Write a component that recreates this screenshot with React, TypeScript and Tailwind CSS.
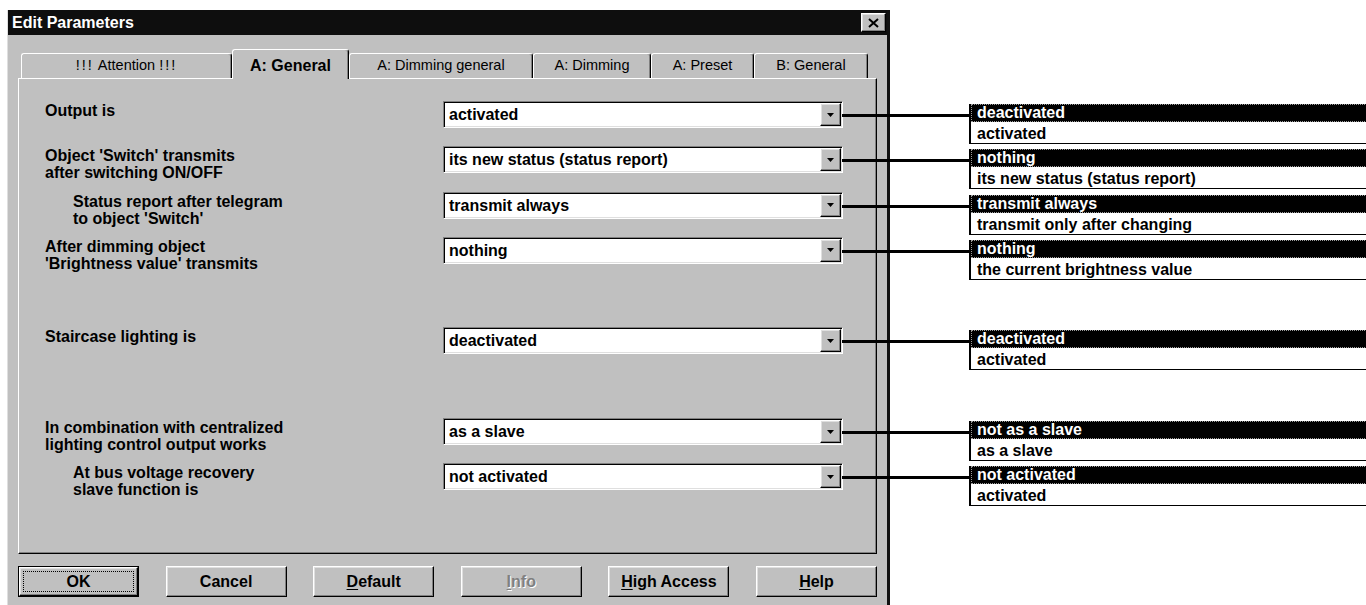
import React from 'react';

type Param = {
  label: string[];
  indent?: boolean;
  value: string;
  options: [string, string];
} | null;

const params: Param[] = [
  { label: ['Output is'], value: 'activated', options: ['deactivated', 'activated'] },
  {
    label: ["Object 'Switch' transmits", 'after switching ON/OFF'],
    value: 'its new status (status report)',
    options: ['nothing', 'its new status (status report)'],
  },
  {
    label: ['Status report after telegram', "to object 'Switch'"],
    indent: true,
    value: 'transmit always',
    options: ['transmit always', 'transmit only after changing'],
  },
  {
    label: ['After dimming object', "'Brightness value' transmits"],
    value: 'nothing',
    options: ['nothing', 'the current brightness value'],
  },
  null,
  { label: ['Staircase lighting is'], value: 'deactivated', options: ['deactivated', 'activated'] },
  null,
  {
    label: ['In combination with centralized', 'lighting control output works'],
    value: 'as a slave',
    options: ['not as a slave', 'as a slave'],
  },
  {
    label: ['At bus voltage recovery', 'slave function is'],
    indent: true,
    value: 'not activated',
    options: ['not activated', 'activated'],
  },
];

const tabs = [
  { label: 'A: General', width: 'w-[117px]', active: true },
  { label: 'A: Dimming general', width: 'w-[184px]' },
  { label: 'A: Dimming', width: 'w-[118px]' },
  { label: 'A: Preset', width: 'w-[103px]' },
  { label: 'B: General', width: 'w-[114px]' },
];

const raised =
  'border border-t-white border-l-white border-r-black border-b-black shadow-[inset_-1px_-1px_0_#808080,inset_1px_1px_0_#dfdfdf]';

const tabIdle =
  'h-[25px] rounded-t-[3px] border-t border-l border-t-white border-l-white border-r border-r-black shadow-[inset_-1px_0_0_#808080] flex items-center justify-center text-[14.5px] font-normal whitespace-nowrap';

function ArrowButton() {
  return (
    <div className={`shrink-0 mr-px w-[21px] h-[23px] bg-[#c0c0c0] flex items-center justify-center ${raised}`}>
      <svg width="7" height="4" viewBox="0 0 7 4">
        <polygon points="0,0 7,0 3.5,4" fill="#000" />
      </svg>
    </div>
  );
}

// the open list drawn next to each combo box, joined by a line
function OptionList({ options }: { options: [string, string] }) {
  return (
    <div className="absolute left-full -top-px flex items-start">
      <div className="mt-[13px] h-[3px] w-[127px] bg-black" />
      <div className="mt-[3px] w-[430px] border-l-2 border-b border-black bg-white">
        <div className="h-[18px] bg-black text-white">
          <div className="h-full border border-dotted border-[#9a9a9a] pl-[5px] leading-[16px] whitespace-nowrap">
            {options[0]}
          </div>
        </div>
        <div className="h-[21px] pl-[6px] pt-[2px] leading-[19px] whitespace-nowrap">{options[1]}</div>
      </div>
    </div>
  );
}

function Combo({ value, options }: { value: string; options: [string, string] }) {
  return (
    <div className="relative w-[400px] h-[27px] bg-white border border-t-[#808080] border-l-[#808080] border-r-white border-b-white shadow-[inset_1px_1px_0_#000,inset_-1px_-1px_0_#dfdfdf] flex items-center">
      <span className="flex-1 pl-[5px] pt-px whitespace-nowrap">{value}</span>
      <ArrowButton />
      <OptionList options={options} />
    </div>
  );
}

function ParamRow({ param }: { param: Param }) {
  if (!param) return <div className="h-[45.3px]" />;
  return (
    <div className="h-[45.3px] flex items-start">
      <div className={`w-[398px] pt-px leading-[17px] ${param.indent ? 'pl-[28px]' : ''}`}>
        {param.label.map((line) => (
          <div key={line} className="whitespace-nowrap">{line}</div>
        ))}
      </div>
      <Combo value={param.value} options={param.options} />
    </div>
  );
}

function Button({
  children,
  isDefault,
  disabled,
}: {
  children: React.ReactNode;
  isDefault?: boolean;
  disabled?: boolean;
}) {
  const text = disabled ? 'text-[#808080] [text-shadow:1px_1px_0_#fff]' : 'text-black';
  if (isDefault) {
    return (
      <div className="w-[121px] h-[31px] border border-black">
        <div className={`h-full bg-[#c0c0c0] p-[3px] ${raised}`}>
          <div className="h-full border border-dotted border-black flex items-center justify-center font-bold">
            {children}
          </div>
        </div>
      </div>
    );
  }
  return (
    <div className={`w-[121px] h-[31px] bg-[#c0c0c0] flex items-center justify-center font-bold ${text} ${raised}`}>
      {children}
    </div>
  );
}

export default function App() {
  return (
    <div className="w-[1366px] h-[605px] overflow-hidden bg-white text-[16px] text-black font-['Liberation_Sans',Arial,sans-serif] font-bold">
      <div className="ml-[7px] mt-[10px] w-[883px] h-[620px] bg-[#c0c0c0] border-l border-l-[#dfdfdf] border-r-[3px] border-r-[#111] flex flex-col">
        {/* title bar */}
        <div className="h-[25px] bg-[#0e0e0e] flex items-center justify-between pl-[4px] pr-[1px]">
          <span className="text-white text-[16px] font-bold">Edit Parameters</span>
          <div className={`w-[25px] h-[19px] bg-[#c0c0c0] flex items-center justify-center ${raised}`}>
            <svg width="11" height="10" viewBox="0 0 11 10">
              <path d="M1 1 L10 9 M10 1 L1 9" stroke="#000" strokeWidth="2" />
            </svg>
          </div>
        </div>

        <div className="px-[10px] pt-[14px]">
          {/* tabs */}
          <div className="h-[29px] flex items-end pl-[3px]">
            <div className={`w-[211px] ${tabIdle}`}>
              <span className="tracking-[2px]">!!!</span>&nbsp;Attention&nbsp;<span className="tracking-[2px]">!!!</span>
            </div>
            {tabs.map((tab) =>
              tab.active ? (
                <div
                  key={tab.label}
                  className={`${tab.width} relative z-10 -mb-px h-[30px] pt-[3px] bg-[#c0c0c0] rounded-t-[3px] border-t border-l border-t-white border-l-white border-r border-r-black shadow-[inset_-1px_0_0_#808080] flex items-center justify-center text-[16px] font-bold`}
                >
                  {tab.label}
                </div>
              ) : (
                <div key={tab.label} className={`${tab.width} ${tabIdle}`}>
                  {tab.label}
                </div>
              )
            )}
          </div>

          {/* parameter page */}
          <div className="h-[476px] border border-t-white border-l-white border-r-black border-b-black shadow-[inset_-1px_-1px_0_#808080] pt-[22px] pl-[26px]">
            {params.map((p, i) => (
              <ParamRow key={i} param={p} />
            ))}
          </div>

          <div className="mt-[12px] flex justify-between">
            <Button isDefault>OK</Button>
            <Button>Cancel</Button>
            <Button>
              <span><u className="underline-offset-2">D</u>efault</span>
            </Button>
            <Button disabled>
              <span><u className="underline-offset-2">I</u>nfo</span>
            </Button>
            <Button>
              <span><u className="underline-offset-2">H</u>igh Access</span>
            </Button>
            <Button>
              <span><u className="underline-offset-2">H</u>elp</span>
            </Button>
          </div>
        </div>
      </div>
    </div>
  );
}
